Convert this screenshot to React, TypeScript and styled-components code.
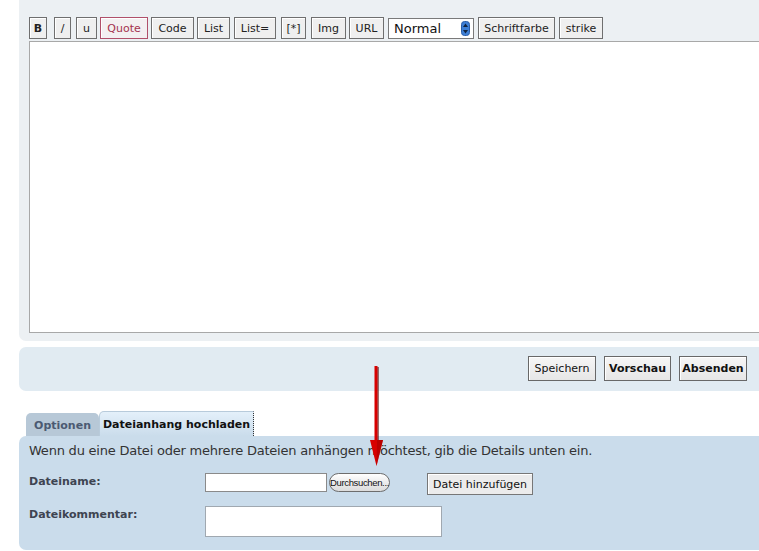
import React from "react";
import styled, { createGlobalStyle, css } from "styled-components";

const GlobalStyle = createGlobalStyle`
  html, body {
    margin: 0;
    padding: 0;
    background: #ffffff;
    overflow: hidden;
  }
  body {
    font-family: "DejaVu Sans", Verdana, sans-serif;
  }
`;

const Page = styled.div`
  position: relative;
  width: 747px;
  padding-left: 19px;
  height: 551px;
`;

const EditorPanel = styled.div`
  background: #ecf0f3;
  border-radius: 0 0 7px 7px;
  padding: 17px 0 8px 10px;
`;

const Toolbar = styled.div`
  display: flex;
  align-items: center;
  height: 22px;
  margin-bottom: 2px;
`;

const ToolButton = styled.button<{ $w: number; $gap?: number; $quote?: boolean; $bold?: boolean }>`
  box-sizing: border-box;
  width: ${(p) => p.$w}px;
  height: 22px;
  margin: 0 ${(p) => p.$gap ?? 4}px 0 0;
  padding: 0;
  background: #efefef;
  border: 1px solid #6f6f6f;
  box-shadow: inset 1px 1px 0 #ffffff;
  font-family: "DejaVu Sans", Verdana, sans-serif;
  font-size: 11px;
  color: #222;
  font-weight: ${(p) => (p.$bold ? 700 : 400)};
  ${(p) =>
    p.$quote &&
    css`
      border-color: #b0506a;
      color: #a5334f;
      background: #f3f0f1;
    `}
`;

const SizeSelect = styled.div`
  box-sizing: border-box;
  width: 86px;
  height: 21px;
  margin-right: 4px;
  background: #ffffff;
  border: 1px solid #7a7a7a;
  display: flex;
  align-items: center;
  justify-content: space-between;
  padding: 0 3px 0 5px;
  font-family: "DejaVu Sans", Verdana, sans-serif;
  font-size: 13px;
  color: #111;
`;

const EditorArea = styled.div`
  box-sizing: border-box;
  height: 292px;
  background: #ffffff;
  border: 1px solid #a8a8a8;
  border-right: none;
`;

const SubmitPanel = styled.div`
  margin-top: 6px;
  height: 44px;
  box-sizing: border-box;
  background: #e1ebf2;
  border-radius: 7px;
  display: flex;
  justify-content: flex-end;
  align-items: flex-start;
  gap: 8px;
  padding: 9px 19px 0 0;
`;

const SubmitButton = styled.button<{ $bold?: boolean; $w: number }>`
  box-sizing: border-box;
  width: ${(p) => p.$w}px;
  height: 25px;
  padding: 0;
  background: linear-gradient(#f6f6f6, #e6e6e6);
  border: 1px solid #686868;
  box-shadow: inset 1px 1px 0 #ffffff;
  font-family: "DejaVu Sans", Verdana, sans-serif;
  font-size: 11px;
  font-weight: ${(p) => (p.$bold ? 700 : 400)};
  color: #111;
`;

const Tabs = styled.div`
  margin-top: 20px;
  display: flex;
  align-items: flex-end;
  padding-left: 7px;
  height: 25px;
`;

const Tab = styled.div<{ $active?: boolean; $w: number }>`
  box-sizing: border-box;
  width: ${(p) => p.$w}px;
  height: ${(p) => (p.$active ? 25 : 23)}px;
  display: flex;
  align-items: center;
  justify-content: center;
  padding-top: ${(p) => (p.$active ? 0 : 1)}px;
  font-family: "DejaVu Sans", Verdana, sans-serif;
  font-size: 11px;
  font-weight: 700;
  border-radius: 5px 5px 0 0;
  ${(p) =>
    p.$active
      ? css`
          background: linear-gradient(#e4f0fa, #cadceb);
          color: #111;
          border-top: 1px solid #b8cbdb;
          border-left: 1px solid #b8cbdb;
          border-right: 1px dotted #333;
          border-radius: 5px 0 0 0;
        `
      : css`
          background: #b7c8d7;
          color: #4b5a72;
        `}
`;

const UploadPanel = styled.div`
  height: 114px;
  box-sizing: border-box;
  background: #cadceb;
  border-radius: 7px 0 7px 7px;
  padding: 6px 10px 0 10px;
`;

const Intro = styled.div`
  font-family: "DejaVu Sans", Verdana, sans-serif;
  font-size: 13px;
  color: #333;
  height: 18px;
  line-height: 18px;
  letter-spacing: -0.22px;
`;

const FieldRow = styled.div<{ $top: number }>`
  display: grid;
  grid-template-columns: 176px auto;
  align-items: start;
  margin-top: ${(p) => p.$top}px;
`;

const Label = styled.div`
  font-family: "DejaVu Sans", Verdana, sans-serif;
  font-size: 11px;
  font-weight: 700;
  color: #3e4451;
  padding-top: 2px;
`;

const Controls = styled.div`
  display: flex;
  align-items: flex-start;
`;

const FileInput = styled.div`
  box-sizing: border-box;
  width: 122px;
  height: 19px;
  background: #ffffff;
  border: 1px solid #8a8a8a;
  margin-right: 2px;
`;

const BrowseButton = styled.button`
  box-sizing: border-box;
  width: 61px;
  height: 19px;
  padding: 0;
  border-radius: 10px;
  border: 1px solid #6d6d6d;
  background: linear-gradient(#ffffff, #ececec 50%, #dcdcdc);
  font-family: "Liberation Sans", Arial, sans-serif;
  font-size: 9.5px;
  letter-spacing: -0.35px;
  color: #111;
  margin-right: 37px;
  white-space: nowrap;
`;

const AddButton = styled.button`
  box-sizing: border-box;
  width: 106px;
  height: 22px;
  padding: 0;
  background: #ececec;
  border: 1px solid #777;
  box-shadow: inset 1px 1px 0 #ffffff;
  font-family: "DejaVu Sans", Verdana, sans-serif;
  font-size: 11px;
  color: #111;
`;

const CommentBox = styled.div`
  box-sizing: border-box;
  width: 237px;
  height: 31px;
  background: #ffffff;
  border: 1px solid #a0a8b0;
`;

const Arrow = styled.svg`
  position: absolute;
  left: 366px;
  top: 364px;
`;

const tools: { label: string; w: number; gap?: number; quote?: boolean; bold?: boolean }[] = [
  { label: "B", w: 18, gap: 7, bold: true },
  { label: "/", w: 17, gap: 5 },
  { label: "u", w: 21, gap: 3 },
  { label: "Quote", w: 48, gap: 3, quote: true },
  { label: "Code", w: 43, gap: 3 },
  { label: "List", w: 33, gap: 4 },
  { label: "List=", w: 42, gap: 5 },
  { label: "[*]", w: 25, gap: 5 },
  { label: "Img", w: 35, gap: 3 },
  { label: "URL", w: 35, gap: 4 },
];

const SpinnerIcon = () => (
  <svg width="9" height="15" viewBox="0 0 9 15">
    <rect x="0.5" y="0.5" width="8" height="14" rx="3" fill="#3d7fd6" stroke="#2a5ea8" />
    <path d="M4.5 2.5 L7 6 L2 6 Z" fill="#10243f" />
    <path d="M4.5 12.5 L7 9 L2 9 Z" fill="#10243f" />
  </svg>
);

export default function App() {
  return (
    <>
      <GlobalStyle />
      <Page>
        <EditorPanel>
          <Toolbar>
            {tools.map((t) => (
              <ToolButton key={t.label} $w={t.w} $gap={t.gap} $quote={t.quote} $bold={t.bold}>
                {t.label}
              </ToolButton>
            ))}
            <SizeSelect>
              Normal
              <SpinnerIcon />
            </SizeSelect>
            <ToolButton $w={77} $gap={4}>Schriftfarbe</ToolButton>
            <ToolButton $w={44}>strike</ToolButton>
          </Toolbar>
          <EditorArea />
        </EditorPanel>

        <SubmitPanel>
          <SubmitButton $w={68}>Speichern</SubmitButton>
          <SubmitButton $w={67} $bold>Vorschau</SubmitButton>
          <SubmitButton $w={68} $bold>Absenden</SubmitButton>
        </SubmitPanel>

        <Tabs>
          <Tab $w={73}>Optionen</Tab>
          <Tab $w={155} $active>Dateianhang hochladen</Tab>
        </Tabs>
        <UploadPanel>
          <Intro>Wenn du eine Datei oder mehrere Dateien anhängen möchtest, gib die Details unten ein.</Intro>
          <FieldRow $top={13}>
            <Label>Dateiname:</Label>
            <Controls>
              <FileInput />
              <BrowseButton>Durchsuchen...</BrowseButton>
              <AddButton>Datei hinzufügen</AddButton>
            </Controls>
          </FieldRow>
          <FieldRow $top={11}>
            <Label>Dateikommentar:</Label>
            <CommentBox />
          </FieldRow>
        </UploadPanel>

        <Arrow width="22" height="104" viewBox="0 0 22 104">
          <rect x="10.5" y="3" width="2.5" height="78" fill="#5a1010" opacity="0.6" />
          <rect x="8.5" y="2" width="3" height="78" fill="#d80000" />
          <path d="M4 76 L17 76 L10.5 102 Z" fill="#d80000" />
          <path d="M11 76 L17 76 L10.5 102 Z" fill="#a50000" opacity="0.6" />
        </Arrow>
      </Page>
    </>
  );
}
